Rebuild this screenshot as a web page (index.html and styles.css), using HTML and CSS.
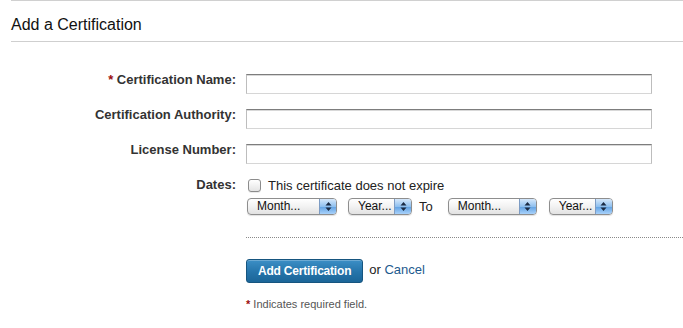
FILE: index.html
```html
<!DOCTYPE html>
<html>
<head>
<meta charset="utf-8">
<link rel="stylesheet" href="styles.css">
</head>
<body>
<div class="page">
  <h2 class="title">Add a Certification</h2>
  <div class="form">
    <label class="label"><span class="req">*</span> Certification Name:</label>
    <input class="text" type="text">
    <label class="label">Certification Authority:</label>
    <input class="text" type="text">
    <label class="label">License Number:</label>
    <input class="text" type="text">
    <label class="label">Dates:</label>
    <div class="dates">
      <div class="check-row">
        <input class="check" type="checkbox">
        <span class="check-text">This certificate does not expire</span>
      </div>
      <div class="select-row">
        <span class="select w-month"><span class="sel-text">Month...</span><span class="arrow"><svg width="7" height="11" viewBox="0 0 7 11"><path d="M3.5 1 L6.5 4.5 L0.5 4.5 Z M0.5 6.5 L6.5 6.5 L3.5 10 Z" fill="#1b2b44"/></svg></span></span>
        <span class="select w-year"><span class="sel-text">Year...</span><span class="arrow"><svg width="7" height="11" viewBox="0 0 7 11"><path d="M3.5 1 L6.5 4.5 L0.5 4.5 Z M0.5 6.5 L6.5 6.5 L3.5 10 Z" fill="#1b2b44"/></svg></span></span>
        <span class="to">To</span>
        <span class="select w-month2"><span class="sel-text">Month...</span><span class="arrow"><svg width="7" height="11" viewBox="0 0 7 11"><path d="M3.5 1 L6.5 4.5 L0.5 4.5 Z M0.5 6.5 L6.5 6.5 L3.5 10 Z" fill="#1b2b44"/></svg></span></span>
        <span class="select w-year2"><span class="sel-text">Year...</span><span class="arrow"><svg width="7" height="11" viewBox="0 0 7 11"><path d="M3.5 1 L6.5 4.5 L0.5 4.5 Z M0.5 6.5 L6.5 6.5 L3.5 10 Z" fill="#1b2b44"/></svg></span></span>
      </div>
    </div>
  </div>
  <div class="actions">
    <div class="button-row">
      <button class="btn" type="button">Add Certification</button>
      <span class="or">or <a class="cancel" href="#">Cancel</a></span>
    </div>
    <p class="note"><span class="req">*</span> Indicates required field.</p>
  </div>
</div>
</body>
</html>
```

FILE: styles.css
```css
html, body {
  margin: 0;
  padding: 0;
  background: #fff;
}
body {
  font-family: "Liberation Sans", Arial, Helvetica, sans-serif;
  color: #333;
}
.page {
  margin-left: 11px;
  border-top: 1px solid #d0d0d0;
}
.title {
  margin: 0;
  padding: 14px 0 6px;
  font-size: 16px;
  line-height: 20px;
  font-weight: normal;
  color: #111;
  border-bottom: 1px solid #cfcfcf;
}
.form {
  display: grid;
  grid-template-columns: 225px 406px;
  column-gap: 10px;
  row-gap: 15px;
  margin-top: 32px;
}
.label {
  text-align: right;
  font-size: 13px;
  line-height: 12px;
  font-weight: bold;
  color: #333;
}
.req {
  color: #9b0d0d;
  font-weight: bold;
}
.text {
  box-sizing: border-box;
  width: 406px;
  height: 20px;
  margin: 0;
  padding: 0 3px;
  border: 1px solid;
  border-color: #7d7d7d #bdbdbd #d6d6d6 #bdbdbd;
  box-shadow: inset 0 1px 0 #d8d8d8;
  background: #fff;
  font-family: inherit;
  font-size: 13px;
  outline: none;
}
.dates {
  display: flex;
  flex-direction: column;
}
.check-row {
  display: flex;
  align-items: center;
  height: 13px;
}
.check {
  appearance: none;
  -webkit-appearance: none;
  box-sizing: border-box;
  width: 13px;
  height: 13px;
  margin: 0 7px 0 2px;
  border: 1px solid #8c8c8c;
  border-radius: 3px;
  background: linear-gradient(#ffffff, #e4e4e4);
  box-shadow: 0 1px 0 rgba(0,0,0,0.08);
}
.check-text {
  font-size: 13px;
  line-height: 13px;
  color: #222;
}
.select-row {
  display: flex;
  align-items: center;
  margin-top: 6px;
  height: 17px;
}
.select {
  box-sizing: border-box;
  display: flex;
  height: 17px;
  border: 1px solid #8e8e8e;
  border-radius: 4px;
  background: linear-gradient(#ffffff, #f2f2f2 50%, #e2e2e2);
  overflow: hidden;
  box-shadow: 0 1px 1px rgba(0,0,0,0.12);
}
.w-month { width: 90px; margin-left: 1px; }
.w-year { width: 64px; margin-left: 11px; }
.w-month2 { width: 89px; }
.w-year2 { width: 64px; margin-left: 12px; }
.sel-text {
  flex: 1;
  padding-left: 9px;
  font-size: 12px;
  line-height: 15px;
  color: #111;
}
.arrow {
  width: 16px;
  display: flex;
  align-items: center;
  justify-content: center;
  border-left: 1px solid #7d9cc4;
  background: linear-gradient(#d6e8fb, #8fc0ef 50%, #5fa0e2 51%, #a9d2fb);
}
.to {
  font-size: 13px;
  line-height: 15px;
  color: #222;
  margin: 0 15px 0 7px;
}
.actions {
  margin-left: 235px;
  margin-top: 22px;
  border-top: 1px dotted #8a8a8a;
  padding-top: 21px;
}
.button-row {
  display: flex;
  align-items: flex-start;
}
.btn {
  box-sizing: border-box;
  height: 24px;
  margin: 0;
  padding: 0 11px;
  border: 1px solid #16557f;
  border-radius: 3px;
  background: linear-gradient(#3c8fc6, #2574aa 55%, #1b6598);
  color: #fff;
  font-family: inherit;
  font-size: 12px;
  font-weight: bold;
  letter-spacing: -0.2px;
  line-height: 22px;
  box-shadow: inset 0 1px 0 rgba(255,255,255,0.25);
}
.or {
  padding-top: 3px;
  margin-left: 6px;
  font-size: 13px;
  line-height: 15px;
  color: #222;
}
.cancel {
  color: #1d5a8e;
  text-decoration: none;
}
.note {
  margin: 15px 0 0;
  font-size: 11px;
  line-height: 13px;
  color: #555;
}
```
